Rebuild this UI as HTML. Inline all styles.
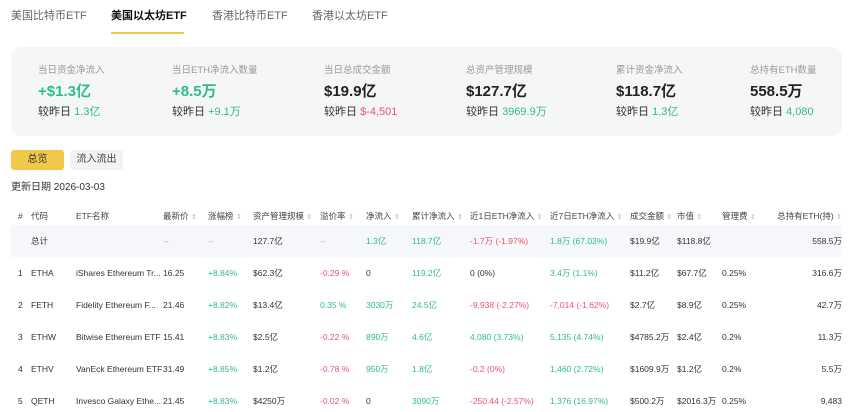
<!DOCTYPE html>
<html><head><meta charset="utf-8"><style>
*{margin:0;padding:0;box-sizing:border-box}
body{width:852px;height:412px;background:#fff;font-family:"Liberation Sans","Noto Sans CJK SC",sans-serif;color:#222;position:relative;overflow:hidden}
.a{position:absolute;white-space:nowrap;line-height:1}
.tab{font-size:11px;color:#666;top:11px}
.card{position:absolute;left:11px;top:47px;width:831px;height:89px;background:#f5f6f8;border-radius:10px}
.lb{font-size:9.5px;color:#999;top:66px}
.v{font-size:15px;font-weight:bold;top:84px;color:#222}
.s{font-size:11px;color:#333;top:107px}
.h{font-size:8.5px;color:#444;top:212px}
.c{font-size:8.5px;color:#333}
body .g{color:#2ebd85}body .r{color:#f0506e}
.ar{color:#bbb;font-size:7px}
</style></head><body>
<div class="a tab" style="left:11px">美国比特币ETF</div>
<div class="a tab" style="left:111px;color:#111;font-weight:bold">美国以太坊ETF</div>
<div class="a tab" style="left:212px">香港比特币ETF</div>
<div class="a tab" style="left:312px">香港以太坊ETF</div>
<div style="position:absolute;left:111px;top:32px;width:73px;height:2px;background:#f0c94a"></div>

<div class="card"></div>
<div class="a lb" style="left:38px">当日资金净流入</div>
<div class="a lb" style="left:172px">当日ETH净流入数量</div>
<div class="a lb" style="left:324px">当日总成交金额</div>
<div class="a lb" style="left:466px">总资产管理规模</div>
<div class="a lb" style="left:616px">累计资金净流入</div>
<div class="a lb" style="left:750px">总持有ETH数量</div>
<div class="a v g" style="left:38px">+$1.3亿</div>
<div class="a v g" style="left:172px">+8.5万</div>
<div class="a v" style="left:324px">$19.9亿</div>
<div class="a v" style="left:466px">$127.7亿</div>
<div class="a v" style="left:616px">$118.7亿</div>
<div class="a v" style="left:750px">558.5万</div>
<div class="a s" style="left:38px">较昨日 <span class="g">1.3亿</span></div>
<div class="a s" style="left:172px">较昨日 <span class="g">+9.1万</span></div>
<div class="a s" style="left:324px">较昨日 <span class="r">$-4,501</span></div>
<div class="a s" style="left:466px">较昨日 <span class="g">3969.9万</span></div>
<div class="a s" style="left:616px">较昨日 <span class="g">1.3亿</span></div>
<div class="a s" style="left:750px">较昨日 <span class="g">4,080</span></div>

<div style="position:absolute;left:11px;top:150px;width:53px;height:20px;background:#f0c94a;border-radius:3px;font-size:10px;color:#333;text-align:center;line-height:20px">总览</div>
<div style="position:absolute;left:70px;top:150px;width:53px;height:20px;background:#f2f3f5;border-radius:3px;font-size:10px;color:#444;text-align:center;line-height:20px">流入流出</div>
<div class="a" style="left:11px;top:183px;font-size:10px;color:#333">更新日期 2026-03-03</div>

<div class="a h" style="left:18px">#</div>
<div class="a h" style="left:31px">代码</div>
<div class="a h" style="left:76px">ETF名称</div>
<div class="a h" style="left:163px">最新价 <span class="ar">⇕</span></div>
<div class="a h" style="left:208px">涨幅榜 <span class="ar">⇕</span></div>
<div class="a h" style="left:253px">资产管理规模 <span class="ar">⇕</span></div>
<div class="a h" style="left:320px">溢价率 <span class="ar">⇕</span></div>
<div class="a h" style="left:366px">净流入 <span class="ar">⇕</span></div>
<div class="a h" style="left:412px">累计净流入 <span class="ar">⇕</span></div>
<div class="a h" style="left:470px">近1日ETH净流入 <span class="ar">⇕</span></div>
<div class="a h" style="left:550px">近7日ETH净流入 <span class="ar">⇕</span></div>
<div class="a h" style="left:630px">成交金额 <span class="ar">⇕</span></div>
<div class="a h" style="left:677px">市值 <span class="ar">⇕</span></div>
<div class="a h" style="left:722px">管理费 <span class="ar">⇕</span></div>
<div class="a h" style="right:10px">总持有ETH(持) <span class="ar">⇕</span></div>

<div style="position:absolute;left:11px;top:225px;width:831px;height:32px;background:#f5f7fa"></div>
<div class="a c" style="left:31px;top:237px">总计</div>
<div class="a c" style="left:163px;top:237px;color:#aaa">--</div>
<div class="a c" style="left:208px;top:237px;color:#aaa">--</div>
<div class="a c" style="left:253px;top:237px">127.7亿</div>
<div class="a c" style="left:320px;top:237px;color:#aaa">--</div>
<div class="a c g" style="left:366px;top:237px">1.3亿</div>
<div class="a c g" style="left:412px;top:237px">118.7亿</div>
<div class="a c r" style="left:470px;top:237px">-1.7万 (-1.97%)</div>
<div class="a c g" style="left:550px;top:237px">1.8万 (67.03%)</div>
<div class="a c" style="left:630px;top:237px">$19.9亿</div>
<div class="a c" style="left:677px;top:237px">$118.8亿</div>
<div class="a c" style="right:10px;top:237px">558.5万</div>

<div class="a c" style="left:18px;top:269px">1</div><div class="a c" style="left:31px;top:269px">ETHA</div><div class="a c" style="left:76px;top:269px">iShares Ethereum Tr...</div><div class="a c" style="left:163px;top:269px">16.25</div><div class="a c g" style="left:208px;top:269px">+8.84%</div><div class="a c" style="left:253px;top:269px">$62.3亿</div><div class="a c r" style="left:320px;top:269px">-0.29 %</div><div class="a c" style="left:366px;top:269px">0</div><div class="a c g" style="left:412px;top:269px">119.2亿</div><div class="a c" style="left:470px;top:269px">0 (0%)</div><div class="a c g" style="left:550px;top:269px">3.4万 (1.1%)</div><div class="a c" style="left:630px;top:269px">$11.2亿</div><div class="a c" style="left:677px;top:269px">$67.7亿</div><div class="a c" style="left:722px;top:269px">0.25%</div><div class="a c" style="right:10px;top:269px">316.6万</div>
<div class="a c" style="left:18px;top:301px">2</div><div class="a c" style="left:31px;top:301px">FETH</div><div class="a c" style="left:76px;top:301px">Fidelity Ethereum F...</div><div class="a c" style="left:163px;top:301px">21.46</div><div class="a c g" style="left:208px;top:301px">+8.82%</div><div class="a c" style="left:253px;top:301px">$13.4亿</div><div class="a c g" style="left:320px;top:301px">0.35 %</div><div class="a c g" style="left:366px;top:301px">3030万</div><div class="a c g" style="left:412px;top:301px">24.5亿</div><div class="a c r" style="left:470px;top:301px">-9,938 (-2.27%)</div><div class="a c r" style="left:550px;top:301px">-7,014 (-1.62%)</div><div class="a c" style="left:630px;top:301px">$2.7亿</div><div class="a c" style="left:677px;top:301px">$8.9亿</div><div class="a c" style="left:722px;top:301px">0.25%</div><div class="a c" style="right:10px;top:301px">42.7万</div>
<div class="a c" style="left:18px;top:333px">3</div><div class="a c" style="left:31px;top:333px">ETHW</div><div class="a c" style="left:76px;top:333px">Bitwise Ethereum ETF</div><div class="a c" style="left:163px;top:333px">15.41</div><div class="a c g" style="left:208px;top:333px">+8.83%</div><div class="a c" style="left:253px;top:333px">$2.5亿</div><div class="a c r" style="left:320px;top:333px">-0.22 %</div><div class="a c g" style="left:366px;top:333px">890万</div><div class="a c g" style="left:412px;top:333px">4.6亿</div><div class="a c g" style="left:470px;top:333px">4,080 (3.73%)</div><div class="a c g" style="left:550px;top:333px">5,135 (4.74%)</div><div class="a c" style="left:630px;top:333px">$4785.2万</div><div class="a c" style="left:677px;top:333px">$2.4亿</div><div class="a c" style="left:722px;top:333px">0.2%</div><div class="a c" style="right:10px;top:333px">11.3万</div>
<div class="a c" style="left:18px;top:365px">4</div><div class="a c" style="left:31px;top:365px">ETHV</div><div class="a c" style="left:76px;top:365px">VanEck Ethereum ETF</div><div class="a c" style="left:163px;top:365px">31.49</div><div class="a c g" style="left:208px;top:365px">+8.85%</div><div class="a c" style="left:253px;top:365px">$1.2亿</div><div class="a c r" style="left:320px;top:365px">-0.78 %</div><div class="a c g" style="left:366px;top:365px">950万</div><div class="a c g" style="left:412px;top:365px">1.8亿</div><div class="a c r" style="left:470px;top:365px">-0.2 (0%)</div><div class="a c g" style="left:550px;top:365px">1,460 (2.72%)</div><div class="a c" style="left:630px;top:365px">$1609.9万</div><div class="a c" style="left:677px;top:365px">$1.2亿</div><div class="a c" style="left:722px;top:365px">0.2%</div><div class="a c" style="right:10px;top:365px">5.5万</div>
<div class="a c" style="left:18px;top:397px">5</div><div class="a c" style="left:31px;top:397px">QETH</div><div class="a c" style="left:76px;top:397px">Invesco Galaxy Ethe...</div><div class="a c" style="left:163px;top:397px">21.45</div><div class="a c g" style="left:208px;top:397px">+8.83%</div><div class="a c" style="left:253px;top:397px">$4250万</div><div class="a c r" style="left:320px;top:397px">-0.02 %</div><div class="a c" style="left:366px;top:397px">0</div><div class="a c g" style="left:412px;top:397px">3090万</div><div class="a c r" style="left:470px;top:397px">-250.44 (-2.57%)</div><div class="a c g" style="left:550px;top:397px">1,376 (16.97%)</div><div class="a c" style="left:630px;top:397px">$500.2万</div><div class="a c" style="left:677px;top:397px">$2016.3万</div><div class="a c" style="left:722px;top:397px">0.25%</div><div class="a c" style="right:10px;top:397px">9,483</div>
</body></html>
